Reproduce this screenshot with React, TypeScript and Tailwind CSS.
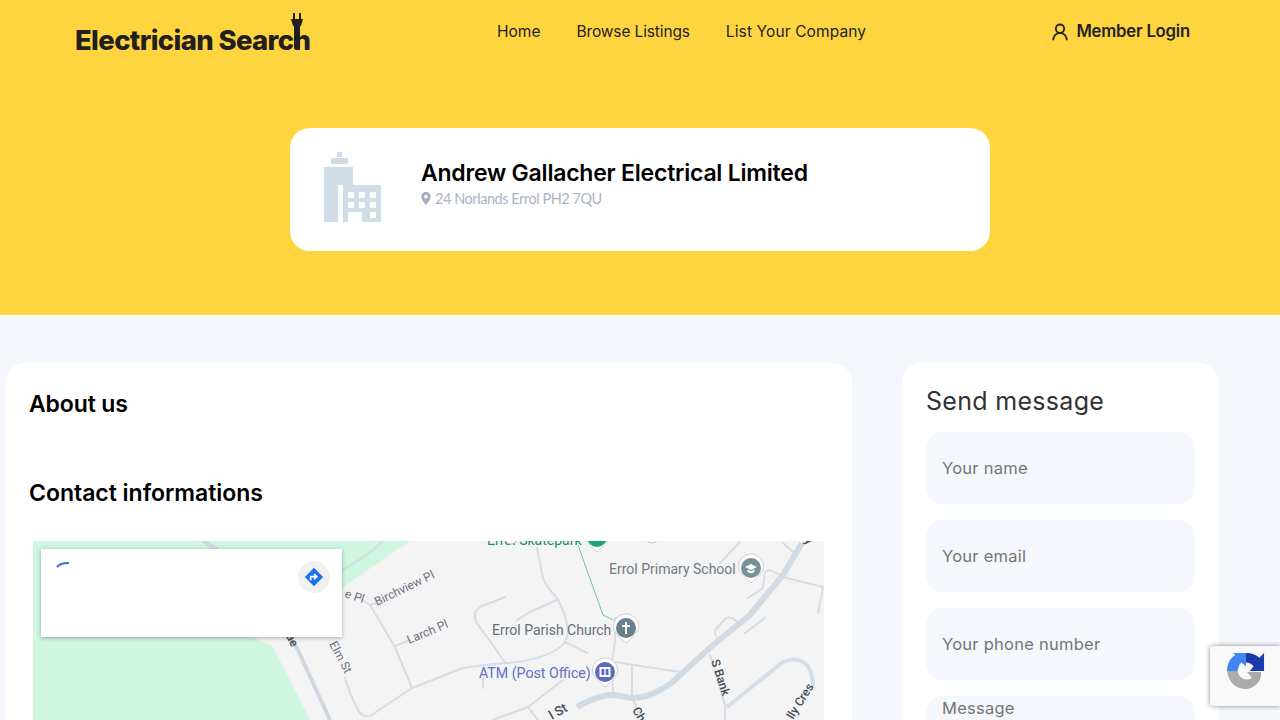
import React from "react";
import { UserRound } from "lucide-react";

const roads = [
  "M203 541 L218 550",
  "M287 636 L297 648 L330 720",
];

const streets = [
  "M345 678 Q350 695 358 710 Q362 718 370 716 L412 688 L395 647 L370 605 L358 597",
  "M395 646 L410 640",
  "M370 605 L376 603",
  "M342 570 Q365 558 383 541",
  "M412 688 L463 668 Q490 664 507 663 Q545 660 563 645 Q570 635 567 625 Q565 612 557 598 Q545 585 543 578 L537 548",
  "M557 600 L530 612 L517 620",
  "M505 597 L480 607 Q472 612 476 622 L493 645 L505 663",
  "M565 642 L587 653",
  "M615 618 L615 642 L612 662 L613 692",
  "M615 662 L680 672",
  "M632 665 L632 698",
  "M633 700 L643 720",
  "M563 680 L528 707 L493 720",
  "M528 707 L538 720",
  "M483 678 L483 688",
  "M710 655 L725 705 L725 720",
  "M717 638 Q713 632 717 628 L726 618 Q731 615 738 623",
  "M745 633 L765 618",
  "M748 598 L763 588 L765 572 Q768 568 780 575",
  "M783 577 L823 587 L818 613",
  "M783 543 L793 552",
  "M720 563 L740 542",
];

function Pin({ x, y, color, children }: { x: number; y: number; color: string; children?: React.ReactNode }) {
  return (
    <g transform={`translate(${x} ${y})`}>
      <path d="M-12 2 A12.5 12.5 0 1 1 12 2 Q8 9 0 15 Q-8 9 -12 2Z" fill="#fff" stroke="#bdbdbd" strokeWidth="0.7" />
      <circle r="10" fill={color} />
      {children}
    </g>
  );
}

function MapDrawing() {
  return (
    <svg viewBox="33 541 791 179" className="block h-[179px] w-[791px]" fontFamily="Roboto, sans-serif">
      <rect x="33" y="541" width="791" height="179" fill="#f4f4f4" />
      <path d="M33 541 L410 541 L343 587 L320 637 L253 637 L273 647 L310 720 L33 720Z" fill="#cff6e1" />
      {streets.map((d) => (
        <path key={d} d={d} fill="none" stroke="#d6dde5" strokeWidth="2" strokeLinejoin="round" strokeLinecap="round" />
      ))}
      {roads.map((d) => (
        <path key={d} d={d} fill="none" stroke="#cfd8e1" strokeWidth="4" />
      ))}
      <path
        d="M577 707 Q590 699 607 695 Q620 695 630 698 Q648 698 660 690 Q672 684 680 675 L713 645 L750 615 L783 575 L802 543"
        fill="none"
        stroke="#d2dbe4"
        strokeWidth="6"
      />
      <path d="M727 707 L783 662 Q795 657 803 662 Q813 668 813 688" fill="none" stroke="#d6dde5" strokeWidth="4" />
      <path d="M578 545 L603 615 L613 620" fill="none" stroke="#74c7a4" strokeWidth="1" />

      <text x="487" y="545" fontSize="14" fill="#1c8a6a">Errol Skatepark</text>
      <Pin x={597} y={537} color="#18a57f" />
      <circle cx="652" cy="537" r="6" fill="#fff" stroke="#bdbdbd" />
      <circle cx="511" cy="538" r="6" fill="#fff" stroke="#bdbdbd" />

      <text x="609" y="574" fontSize="14" fill="#727a83">Errol Primary School</text>
      <Pin x={751} y={568} color="#78909c">
        <path d="M-6 -1 L0 -4 L6 -1 L0 2Z M-3.5 1.5 L0 3.3 L3.5 1.5 V4 L0 5.5 L-3.5 4Z" fill="#fff" />
      </Pin>

      <text x="492" y="635" fontSize="14" fill="#65707a">Errol Parish Church</text>
      <Pin x={626} y={628} color="#687f8c">
        <path d="M-1 -6 H1 V-3 H4 V-1 H1 V6 H-1 V-1 H-4 V-3 H-1Z" fill="#fff" />
      </Pin>

      <text x="479" y="678" fontSize="14.2" fill="#6370c4">ATM (Post Office)</text>
      <Pin x={605} y={672} color="#5c6bc0">
        <path d="M-5.5 -5 H5.5 V5 H-5.5Z" fill="#fff" />
        <path d="M-3.5 -3 H-0.7 V3 H-3.5Z M0.7 -3 H3.5 V3 H0.7Z" fill="#5c6bc0" />
      </Pin>

      <g fontSize="12" fill="#6b7280">
        <text transform="translate(377 606) rotate(-26)">Birchview Pl</text>
        <text transform="translate(409 644) rotate(-23)">Larch Pl</text>
        <text transform="translate(344 597) rotate(18)">e Pl</text>
        <text transform="translate(329 644) rotate(62)">Elm St</text>
      </g>
      <g fontSize="12" fill="#3f4a55" fontWeight="500">
        <text transform="translate(286 636) rotate(65)">ae</text>
        <text transform="translate(711 661) rotate(72)">S Bank</text>
        <text transform="translate(793 720) rotate(-58)">lly Cres</text>
        <text transform="translate(552 720) rotate(-30)" fontSize="13">l St</text>
        <text transform="translate(632 710) rotate(60)">Ch</text>
        <text transform="translate(804 541) rotate(45)">y</text>
      </g>
    </svg>
  );
}

function Recaptcha() {
  return (
    <div className="fixed bottom-[14px] right-0 flex h-[60px] w-[70px] items-start justify-center rounded-l-[3px] bg-[#f9f9f9] pt-[6px] shadow-[0_0_5px_rgba(0,0,0,0.45)]">
      <svg viewBox="0 0 40 40" className="ml-[1px] h-[38px] w-[38px]">
        <path d="M0 20 C0 12 4 6 9 3 L6 1 H20 V15 L15 11 Q12 14 11 20Z" fill="#4285f4" />
        <path d="M20 1 C26 1 31 3 34 6 L39 1 V20 H24 L28 15 Q25 11 20 11Z" fill="#1c3aa9" />
        <path d="M0 20 H11 Q13 29 21 29 Q24 29 26 27 L21 21 H36 Q36 30 31 34 Q26 39 19 39 Q3 38 0 20Z" fill="#ababab" />
      </svg>
    </div>
  );
}

const field = "h-[72px] w-full rounded-2xl bg-[#f4f7fb] px-4 text-[16.5px] tracking-[0.25px] text-gray-700 outline-none placeholder:text-[#757575]";

export default function App() {
  return (
    <div className="h-screen overflow-hidden bg-[#f4f7fb] font-['Inter',sans-serif]">
      <header className="h-[315px] bg-[#ffd53f]">
        <div className="flex h-[63px] items-center pr-[90px] text-[#222]">
          <div className="relative ml-[75px] mt-[20px] w-[422px] shrink-0">
            <span className="text-[27.5px] font-extrabold leading-none tracking-[-0.65px] text-[#231f20]">Electrician Search</span>
            <svg viewBox="0 0 14 40" className="absolute left-[215px] top-[-14px] h-[40px] w-[14px]">
              <path d="M3 0 H5 V6 H3Z M9 0 H11 V6 H9Z M1 6 H13 L11 13 H10 V36 H4 V13 H3Z" fill="#231f20" />
            </svg>
          </div>
          <nav className="mt-[1px] flex gap-9 text-[15.5px]">
            <a>Home</a>
            <a className="tracking-[-0.13px]">Browse Listings</a>
            <a className="tracking-[0.12px]">List Your Company</a>
          </nav>
          <a className="ml-auto flex items-center gap-[6px] text-[16.7px] font-semibold tracking-[-0.2px]">
            <UserRound className="mt-[2px] h-[20px] w-[20px]" strokeWidth={2.2} />
            Member Login
          </a>
        </div>
        <div className="mx-auto mt-[65px] flex h-[123px] w-[700px] items-center rounded-[20px] bg-white">
          <svg viewBox="0 0 58 72" className="ml-[34px] mt-[-3px] h-[72px] w-[58px]">
            <path
              fillRule="evenodd"
              d="M13 0 H18 V5 H13Z M7 6 H24 V12 H7Z M0 15 H29 V33 H14 V70 H0Z M19 33 H57 V70 H38 V60 H24 V70 H19Z M24 40 V46 H30 V40Z M35 40 V46 H41 V40Z M46 40 V46 H52 V40Z M24 50 V56 H30 V50Z M35 50 V56 H41 V50Z M46 50 V56 H52 V50Z M46 60 V66 H52 V60Z"
              fill="#d0dce7"
            />
          </svg>
          <div className="mb-[12px] ml-[39px]">
            <h1 className="text-[23px] font-semibold leading-[30px] tracking-[-0.22px] text-black">Andrew Gallacher Electrical Limited</h1>
            <p className="flex items-center gap-[4px] font-['Lato',sans-serif] text-[14.5px] leading-[22px] tracking-[-0.45px] text-[#a9b4c2]">
              <svg viewBox="0 0 10 14" className="h-[13px] w-[10px]">
                <path fillRule="evenodd" d="M5 0 A5 5 0 0 1 10 5 C10 8 7 11 5 14 C3 11 0 8 0 5 A5 5 0 0 1 5 0Z M5 3 A2 2 0 1 0 5 7 A2 2 0 1 0 5 3Z" fill="#a0adba" />
              </svg>
              24 Norlands Errol PH2 7QU
            </p>
          </div>
        </div>
      </header>
      <main className="flex items-start gap-[50px] pl-[5px] pt-[48px]">
        <section className="h-[500px] w-[847px] shrink-0 rounded-[20px] bg-white px-6 pt-[25px]">
          <h2 className="text-[23px] font-semibold leading-[33px] tracking-[-0.12px] text-black">About us</h2>
          <h2 className="mt-[56px] text-[23px] font-semibold leading-[33px] tracking-[-0.02px] text-black">Contact informations</h2>
          <div className="relative ml-1 mt-[31px] w-[791px] overflow-hidden">
            <MapDrawing />
            <div className="absolute left-2 top-2 h-[88px] w-[301px] bg-white shadow-[0_1px_4px_rgba(0,0,0,0.3)]">
              <svg viewBox="0 0 16 8" className="absolute left-[15px] top-[12px] h-[8px] w-[16px]">
                <path d="M1 6 Q5 1.5 13 2" fill="none" stroke="#3b6fd8" strokeWidth="2" />
              </svg>
              <div className="absolute right-[12px] top-[12px] flex h-8 w-8 items-center justify-center rounded-full bg-[#f1f1f1]">
                <svg viewBox="0 0 24 24" className="h-[20px] w-[20px]">
                  <path d="M12 1 L23 12 L12 23 L1 12Z" fill="#1a73e8" />
                  <path d="M8 16 V11.5 H14 M12 8.5 L15.5 11.5 L12 14.5" fill="none" stroke="#fff" strokeWidth="2" />
                </svg>
              </div>
            </div>
          </div>
        </section>
        <aside className="h-[500px] w-[317px] shrink-0 rounded-[20px] bg-white px-6 pt-5">
          <h3 className="text-[25px] leading-[36px] tracking-[0.3px] text-[#333]">Send message</h3>
          <form className="mt-[13px] flex flex-col gap-4">
            <input className={field} placeholder="Your name" />
            <input className={field} placeholder="Your email" />
            <input className={field} placeholder="Your phone number" />
            <textarea className="h-[120px] w-full resize-none rounded-2xl bg-[#f4f7fb] px-4 text-[16.5px] leading-[24px] tracking-[0.25px] outline-none placeholder:text-[#757575]" placeholder="Message" />
          </form>
        </aside>
      </main>
      <Recaptcha />
    </div>
  );
}
